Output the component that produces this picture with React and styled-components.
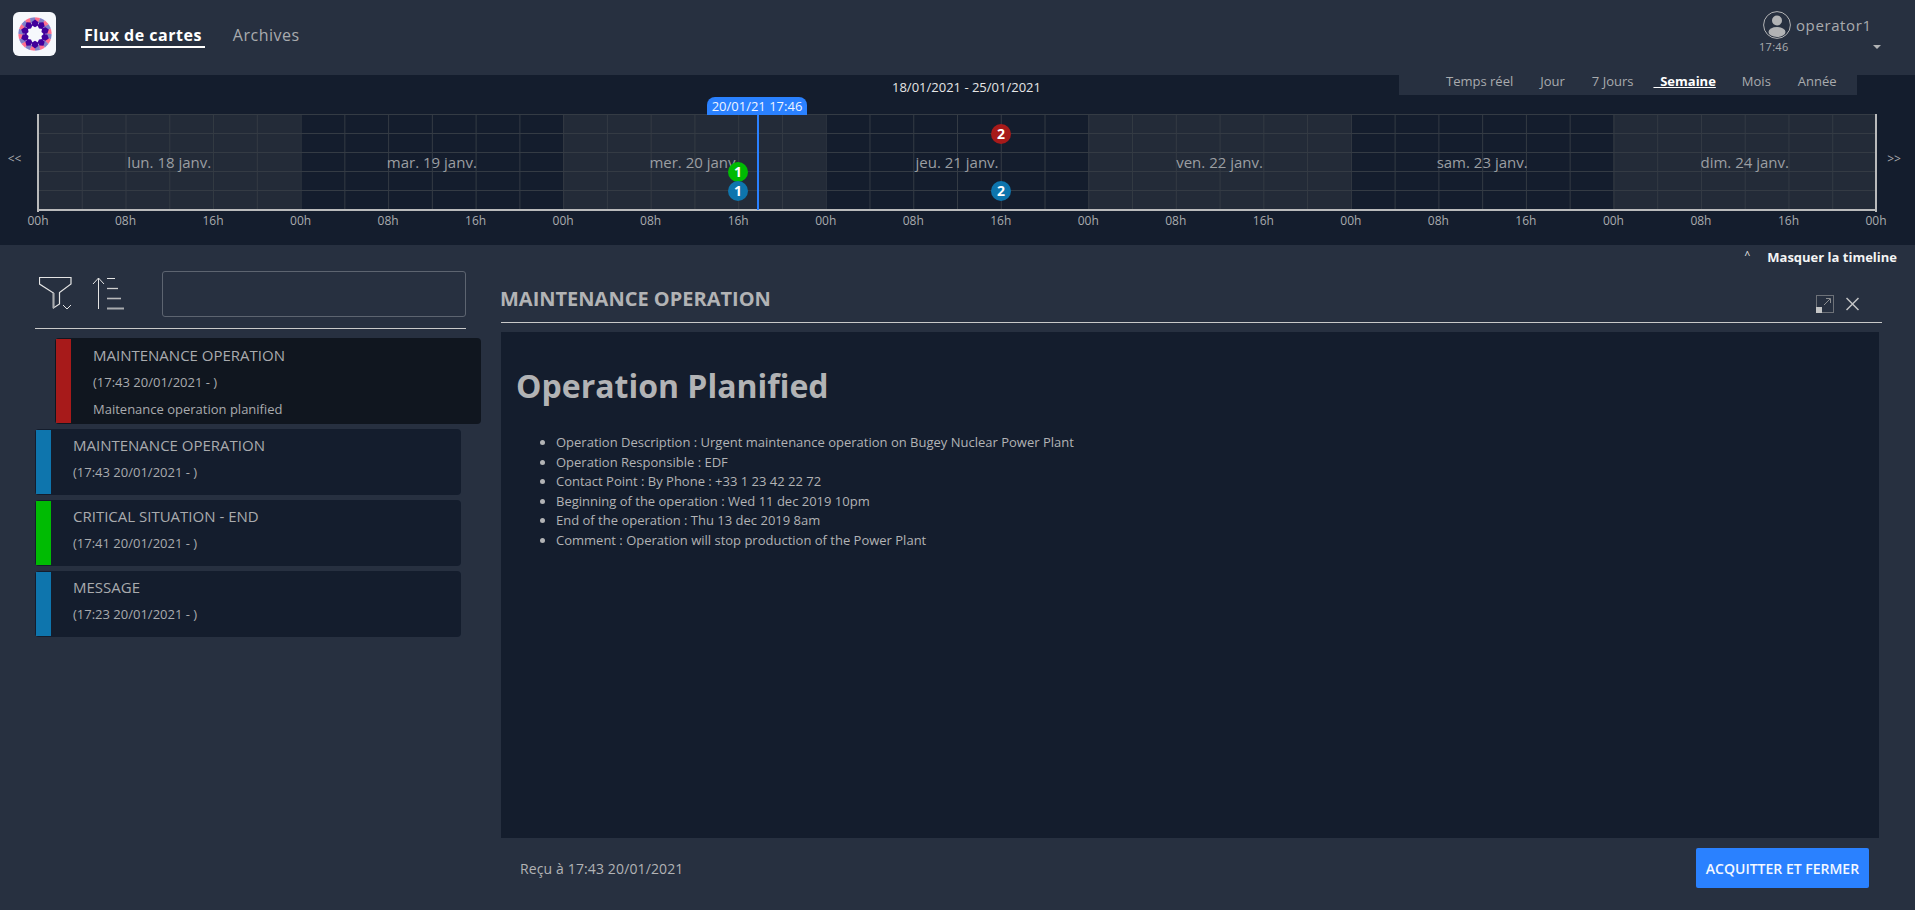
import React from "react";
import styled, { createGlobalStyle } from "styled-components";

const Global = createGlobalStyle`
  html, body { margin: 0; padding: 0; background: #273040; }
  body { font-family: "Open Sans", "Noto Sans", sans-serif; color: #b2b3b5; }
  * { box-sizing: border-box; }
`;

const Page = styled.div`
  width: 1915px;
  height: 910px;
  display: flex;
  flex-direction: column;
  overflow: hidden;
  background: #273040;
`;

/* ---------- Navbar ---------- */
const Navbar = styled.header`
  height: 75px;
  flex: none;
  display: flex;
  align-items: flex-start;
  padding: 12px 0 0 13px;
`;
const LogoBox = styled.div`
  width: 43px;
  height: 44px;
  background: #f6f8fc;
  border-radius: 6px;
  display: flex;
  align-items: center;
  justify-content: center;
`;
const NavLinks = styled.nav`
  display: flex;
  margin: 12px 0 0 25px;
  gap: 25px;
`;
const NavLink = styled.a`
  font-size: 16px;
  line-height: 22px;
  height: 24px;
  padding: 0 3px;
  letter-spacing: 0.5px;
  font-weight: ${(p) => (p.$active ? 700 : 400)};
  color: ${(p) => (p.$active ? "#ffffff" : "#a9abae")};
  border-bottom: ${(p) => (p.$active ? "2px solid #ffffff" : "none")};
`;
const UserMenu = styled.div`
  margin-left: auto;
  width: 156px;
  margin-top: -1px;
  display: grid;
  grid-template-columns: 34px 1fr;
  grid-template-rows: 28px 16px;
  column-gap: 3px;
`;
const Avatar = styled.div`
  width: 28px;
  height: 28px;
  justify-self: center;
  margin-left: 1px;
`;
const UserName = styled.span`
  font-size: 15px;
  letter-spacing: 0.6px;
  line-height: 28px;
  color: #a9abae;
`;
const ClockTime = styled.span`
  font-size: 11px;
  line-height: 16px;
  letter-spacing: 0.3px;
  color: #a9abae;
  white-space: nowrap;
`;
const Caret = styled.span`
  justify-self: end;
  align-self: center;
  margin-right: 34px;
  width: 0;
  height: 0;
  border-left: 4px solid transparent;
  border-right: 4px solid transparent;
  border-top: 4px solid #b2b3b5;
`;

/* ---------- Timeline ---------- */
const TimelinePanel = styled.section`
  height: 170px;
  flex: none;
  background: #141d2d;
  display: flex;
  flex-direction: column;
`;
const TimelineHead = styled.div`
  height: 39px;
  flex: none;
  display: flex;
  align-items: flex-start;
  position: relative;
`;
const DateRange = styled.div`
  position: absolute;
  left: 892px;
  top: 3px;
  font-size: 13px;
  line-height: 18px;
  color: #e6e6e6;
`;
const PeriodBar = styled.div`
  margin-left: 1399px;
  width: 458px;
  height: 20px;
  background: #273040;
  display: flex;
  align-items: flex-start;
  padding-left: 47px;
  gap: 27px;
`;
const Period = styled.a`
  font-size: 13px;
  line-height: 12px;
  color: ${(p) => (p.$active ? "#ffffff" : "#a9abae")};
  font-weight: ${(p) => (p.$active ? 700 : 400)};
  margin-left: ${(p) => (p.$active ? "-7px" : "0")};
  margin-right: ${(p) => (p.$active ? "-1px" : "0")};
  white-space: pre;
  text-decoration: ${(p) => (p.$active ? "underline" : "none")};
`;
const ChartRow = styled.div`
  display: flex;
  align-items: flex-start;
`;
const Pager = styled.span`
  width: 37px;
  flex: none;
  font-size: 12px;
  line-height: 14px;
  margin-top: 38px;
  text-align: center;
  color: #a9abae;
  padding-right: ${(p) => (p.$right ? "5px" : "8px")};
`;
const ChartBox = styled.div`
  position: relative;
  width: 1841px;
  flex: none;
`;
const ChartSvg = styled.svg`
  display: block;
  overflow: visible;
`;
const NowTag = styled.div`
  position: absolute;
  left: 670px;
  top: -17px;
  width: 100px;
  height: 18px;
  background: #2a81ff;
  border-radius: 8px 8px 0 0;
  font-size: 13px;
  line-height: 18px;
  text-align: center;
  color: #eef4ff;
`;

/* ---------- Toggle line ---------- */
const ToggleRow = styled.div`
  height: 24px;
  flex: none;
  display: flex;
  justify-content: flex-end;
  align-items: center;
  padding-right: 18px;
  font-size: 13px;
  font-weight: 700;
  color: #f4f4f4;
`;
const ToggleCaret = styled.span`
  font-size: 10px;
  margin-right: 17px;
  margin-top: -5px;
  font-weight: 400;
`;

/* ---------- Main ---------- */
const Main = styled.main`
  flex: 1;
  display: flex;
  min-height: 0;
`;
const FeedColumn = styled.aside`
  width: 501px;
  flex: none;
  padding: 2px 0 0 35px;
`;
const FeedToolbar = styled.div`
  width: 431px;
  height: 58px;
  border-bottom: 1px solid #c9c9c9;
  display: flex;
  align-items: flex-start;
`;
const FilterIcon = styled.svg`
  margin: 6px 0 0 4px;
  flex: none;
`;
const SortIcon = styled.svg`
  margin: 6px 0 0 19px;
  flex: none;
`;
const SearchInput = styled.input`
  margin-left: 37px;
  width: 304px;
  height: 46px;
  background: transparent;
  border: 1px solid #5d6470;
  border-radius: 3px;
  outline: none;
`;
const CardList = styled.div`
  display: flex;
  flex-direction: column;
  gap: 5px;
  margin-top: 9px;
`;
const Card = styled.article`
  width: 426px;
  margin-left: ${(p) => (p.$selected ? "20px" : "0")};
  height: ${(p) => (p.$selected ? "86px" : "66px")};
  background: ${(p) => (p.$selected ? "#10161f" : "#141d2d")};
  border-radius: 4px;
  padding: 1px;
  display: flex;
`;
const CardBar = styled.div`
  width: 15px;
  flex: none;
  background: ${(p) => p.$color};
`;
const CardBody = styled.div`
  padding: ${(p) => (p.$selected ? "5px" : "4px")} 0 0 22px;
  color: #a9abae;
`;
const CardTitle = styled.div`
  font-size: 15px;
  line-height: 22px;
`;
const CardLine = styled.div`
  font-size: 13px;
  line-height: 18px;
  margin-top: 7px;
`;
const CardSummary = styled.div`
  font-size: 13px;
  line-height: 18px;
  margin-top: 9px;
`;

/* ---------- Detail ---------- */
const Detail = styled.section`
  flex: 1;
  padding-right: 33px;
  display: flex;
  flex-direction: column;
`;
const DetailHead = styled.div`
  height: 54px;
  flex: none;
  border-bottom: 1px solid #c9c9c9;
  display: flex;
  align-items: flex-start;
`;
const DetailTitle = styled.h2`
  margin: 18px 0 0 -1px;
  font-size: 20px;
  line-height: 24px;
  font-weight: 700;
  color: #b2b3b5;
`;
const DetailActions = styled.div`
  margin-left: auto;
  margin-top: 26px;
  margin-right: 23px;
  display: flex;
  gap: 12px;
  align-items: center;
`;
const DetailBody = styled.div`
  height: 506px;
  width: 1378px;
  margin-top: 9px;
  flex: none;
  background: #141d2d;
  padding: 32px 15px 0;
`;
const BodyTitle = styled.h1`
  margin: 0;
  font-size: 32px;
  line-height: 44px;
  font-weight: 700;
  color: #b2b3b5;
`;
const BodyList = styled.ul`
  margin: 25px 0 0;
  padding-left: 40px;
  font-size: 13px;
  line-height: 19.6px;
  color: #b2b3b5;
`;
const DetailFoot = styled.div`
  flex: 1;
  display: flex;
  align-items: flex-start;
  justify-content: space-between;
  width: 1378px;
  padding: 10px 10px 0 20px;
`;
const Received = styled.span`
  margin: 12px 0 0 -1px;
  font-size: 14px;
  line-height: 18px;
  letter-spacing: 0.13px;
  font-weight: 500;
  color: #b2b3b5;
`;
const AckButton = styled.button`
  width: 173px;
  height: 40px;
  border: none;
  border-radius: 2px;
  background: #2a81ff;
  color: #f4f8ff;
  font-family: inherit;
  font-size: 14px;
  font-weight: 600;
`;

/* ---------- Drawings ---------- */
const Logo = () => {
  const petals = Array.from({ length: 10 }, (_, i) => i * 36);
  const wedges = Array.from({ length: 20 }, (_, i) => i * 18 + 9);
  return (
    <svg width="34" height="34" viewBox="-17 -17 34 34">
      {wedges.map((a, i) => (
        <polygon
          key={"o" + a}
          points="-2.6,-11 2.6,-11 2.4,-16.6 -2.4,-16.6"
          fill={i % 2 ? "#8080c8" : "#ff6f8e"}
          transform={`rotate(${a})`}
        />
      ))}
      <circle r="11" fill="#f6f8fc" />
      {petals.map((a) => (
        <polygon
          key={"i" + a}
          points="0,-14.5 3.2,-12 3,-8.4 0,-6.8 -3,-8.4 -3.2,-12"
          fill="#41009b"
          transform={`rotate(${a})`}
        />
      ))}
    </svg>
  );
};

const DAY = 1838 / 7;
const days = ["lun. 18 janv.", "mar. 19 janv.", "mer. 20 janv.", "jeu. 21 janv.", "ven. 22 janv.", "sam. 23 janv.", "dim. 24 janv."];

const Bubble = ({ x, y, n, color }) => (
  <g>
    <circle cx={x} cy={y} r="10" fill={color} />
    <text x={x} y={y + 5} textAnchor="middle" fontSize="14" fontWeight="700" fill="#fff" fontFamily="Open Sans">{n}</text>
  </g>
);

const Chart = () => {
  const x = (h) => 1 + (h / 24) * DAY;
  const verticals = Array.from({ length: 43 }, (_, i) => i * 4);
  const ticks = Array.from({ length: 22 }, (_, i) => i * 8);
  const rows = [1, 20, 39, 58, 77];
  const axisLabel = { fontFamily: "Open Sans", fontSize: 12, fill: "#a9abae", textAnchor: "middle" };
  return (
    <ChartSvg width="1841" height="128" viewBox="0 0 1841 128">
      {days.map((d, i) =>
        i % 2 === 0 ? <rect key={d} x={x(i * 24)} y="0" width={DAY} height="96" fill="#232b38" /> : null
      )}
      {verticals.map((h) => (
        <line key={h} x1={x(h) + 0.5} x2={x(h) + 0.5} y1="0" y2="96" stroke="#343b44" />
      ))}
      {rows.map((r) => (
        <line key={r} x1="1" x2="1839" y1={r - 0.5} y2={r - 0.5} stroke="#343b44" />
      ))}
      {days.map((d, i) => (
        <text key={d} x={x(i * 24 + 12)} y="54" textAnchor="middle" fontSize="15" fill="#9b9ea2" fontFamily="Open Sans">{d}</text>
      ))}
      <line x1="1" x2="1" y1="0" y2="98" stroke="#b9babb" strokeWidth="2" />
      <line x1="1839" x2="1839" y1="0" y2="98" stroke="#b9babb" strokeWidth="2" />
      <line x1="0" x2="1840" y1="96" y2="96" stroke="#b9babb" strokeWidth="2" />
      <line x1="721" x2="721" y1="0" y2="96" stroke="#2a81ff" strokeWidth="2" />
      <Bubble x={701} y={58} n="1" color="#00bb03" />
      <Bubble x={701} y={77} n="1" color="#0e75ad" />
      <Bubble x={964} y={20} n="2" color="#a71a1a" />
      <Bubble x={964} y={77} n="2" color="#0e75ad" />
      {ticks.map((h) => (
        <text key={h} x={x(h)} y="111" {...axisLabel}>{["00h", "08h", "16h"][(h / 8) % 3]}</text>
      ))}
    </ChartSvg>
  );
};

const cards = [
  { color: "#a71a1a", title: "MAINTENANCE OPERATION", time: "(17:43 20/01/2021 - )", summary: "Maitenance operation planified", selected: true },
  { color: "#0e75ad", title: "MAINTENANCE OPERATION", time: "(17:43 20/01/2021 - )" },
  { color: "#00bb03", title: "CRITICAL SITUATION - END", time: "(17:41 20/01/2021 - )" },
  { color: "#0e75ad", title: "MESSAGE", time: "(17:23 20/01/2021 - )" },
];

const lines = [
  "Operation Description : Urgent maintenance operation on Bugey Nuclear Power Plant",
  "Operation Responsible : EDF",
  "Contact Point : By Phone : +33 1 23 42 22 72",
  "Beginning of the operation : Wed 11 dec 2019 10pm",
  "End of the operation : Thu 13 dec 2019 8am",
  "Comment : Operation will stop production of the Power Plant",
];

export default function App() {
  return (
    <Page>
      <Global />
      <Navbar>
        <LogoBox><Logo /></LogoBox>
        <NavLinks>
          <NavLink $active>Flux de cartes</NavLink>
          <NavLink>Archives</NavLink>
        </NavLinks>
        <UserMenu>
          <Avatar>
            <svg width="28" height="28" viewBox="0 0 28 28">
              <circle cx="14" cy="14" r="13.4" fill="none" stroke="#b2b3b5" strokeWidth="1" />
              <circle cx="14" cy="9.5" r="5" fill="#b2b3b5" />
              <ellipse cx="14" cy="21" rx="8.5" ry="5" fill="#b2b3b5" />
            </svg>
          </Avatar>
          <UserName>operator1</UserName>
          <ClockTime>17:46</ClockTime>
          <Caret />
        </UserMenu>
      </Navbar>

      <TimelinePanel>
        <TimelineHead>
          <DateRange>18/01/2021 - 25/01/2021</DateRange>
          <PeriodBar>
            <Period>Temps réel</Period>
            <Period>Jour</Period>
            <Period>7 Jours</Period>
            <Period $active>{"  Semaine"}</Period>
            <Period>Mois</Period>
            <Period>Année</Period>
          </PeriodBar>
        </TimelineHead>
        <ChartRow>
          <Pager>&lt;&lt;</Pager>
          <ChartBox>
            <Chart />
            <NowTag>20/01/21 17:46</NowTag>
          </ChartBox>
          <Pager $right>&gt;&gt;</Pager>
        </ChartRow>
      </TimelinePanel>

      <ToggleRow>
        <ToggleCaret>^</ToggleCaret>
        Masquer la timeline
      </ToggleRow>

      <Main>
        <FeedColumn>
          <FeedToolbar>
            <FilterIcon width="34" height="33" viewBox="0 0 34 33">
              <path d="M0.5 0.5H32V7L20.5 15.5V27L14.5 31V16L0.5 7Z" fill="none" stroke="#e4e4e4" strokeWidth="1.2" />
              <path d="M14.5 16V31" stroke="#a9abae" strokeWidth="2" />
              <path d="M24 28L28 32L32 28" fill="none" stroke="#e4e4e4" strokeWidth="1" />
            </FilterIcon>
            <SortIcon width="33" height="33" viewBox="0 0 33 33">
              <path d="M6.5 32V1M1 7L6.5 1L12 7" fill="none" stroke="#e4e4e4" strokeWidth="1" />
              <path d="M15 1.5H23" stroke="#e4e4e4" strokeWidth="1" />
              <path d="M15 11.5H26" stroke="#d0d0d0" strokeWidth="1.3" />
              <path d="M15 21.5H29" stroke="#b9babb" strokeWidth="1.6" />
              <path d="M15 31.5H32" stroke="#a9abae" strokeWidth="2" />
            </SortIcon>
            <SearchInput />
          </FeedToolbar>
          <CardList>
            {cards.map((c) => (
              <Card key={c.title + c.color} $selected={c.selected}>
                <CardBar $color={c.color} />
                <CardBody $selected={c.selected}>
                  <CardTitle>{c.title}</CardTitle>
                  <CardLine>{c.time}</CardLine>
                  {c.summary && <CardSummary>{c.summary}</CardSummary>}
                </CardBody>
              </Card>
            ))}
          </CardList>
        </FeedColumn>

        <Detail>
          <DetailHead>
            <DetailTitle>MAINTENANCE OPERATION</DetailTitle>
            <DetailActions>
              <svg width="18" height="18" viewBox="0 0 18 18">
                <rect x="0.5" y="0.5" width="17" height="17" fill="none" stroke="#6d7178" />
                <rect x="0" y="12" width="6" height="6" fill="#c4c5c6" />
                <path d="M8 10L14 4M10 3.5H14.5V8" fill="none" stroke="#8b8d90" strokeWidth="1" />
              </svg>
              <svg width="13" height="14" viewBox="0 0 13 14">
                <path d="M0.5 1L12.5 13M12.5 1L0.5 13" stroke="#c4c5c6" strokeWidth="1.5" />
              </svg>
            </DetailActions>
          </DetailHead>
          <DetailBody>
            <BodyTitle>Operation Planified</BodyTitle>
            <BodyList>
              {lines.map((l) => <li key={l}>{l}</li>)}
            </BodyList>
          </DetailBody>
          <DetailFoot>
            <Received>Reçu à 17:43 20/01/2021</Received>
            <AckButton>ACQUITTER ET FERMER</AckButton>
          </DetailFoot>
        </Detail>
      </Main>
    </Page>
  );
}
